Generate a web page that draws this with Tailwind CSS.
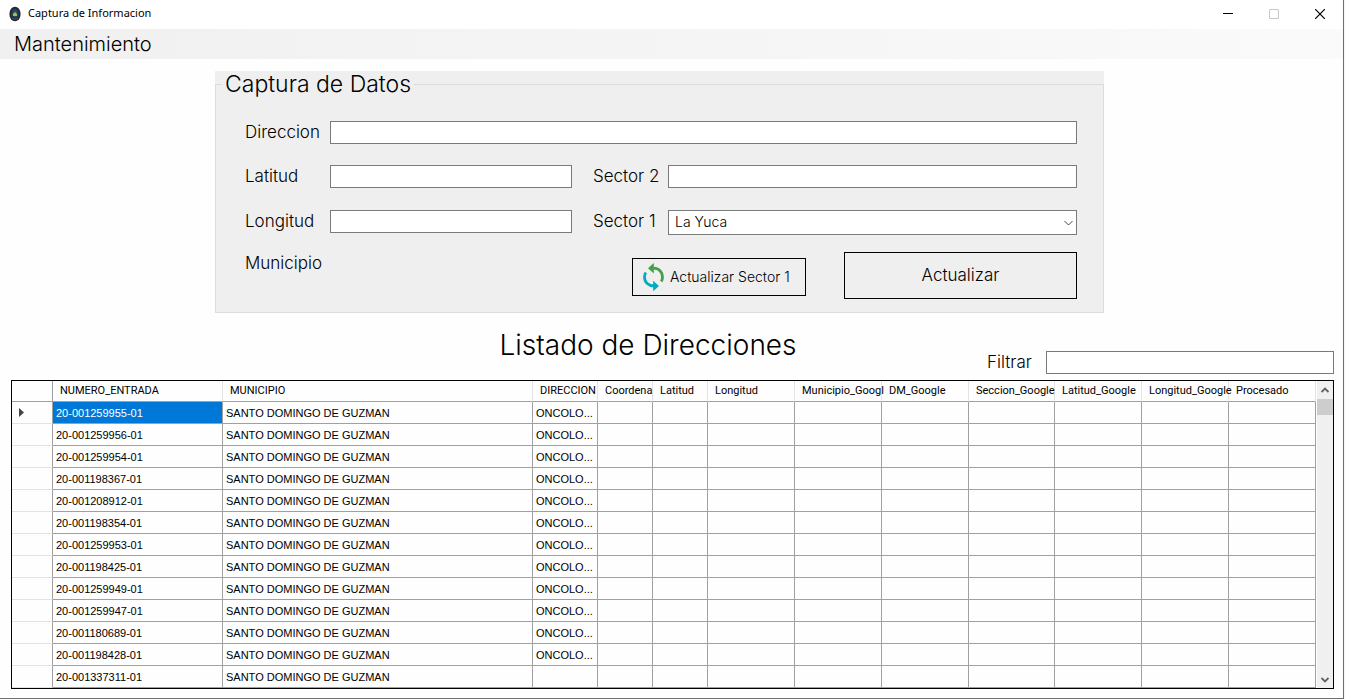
<!DOCTYPE html>
<html lang="es">
<head>
<meta charset="utf-8">
<title>Captura de Informacion</title>
<script src="https://cdn.jsdelivr.net/npm/@tailwindcss/browser@4"></script>
</head>
<body class="bg-[#f4f4f4] pr-px text-black font-[Inter,sans-serif] font-light">
<div class="flex min-h-screen flex-col border-r border-b border-[#6e6e6e] bg-[#fefefe]">
  <header class="flex h-[29px] items-center bg-white pb-[2px] pl-2 font-['Noto_Sans',sans-serif] font-normal">
    <svg class="h-4 w-4" viewBox="0 0 16 16" aria-hidden="true">
      <ellipse cx="7" cy="8" rx="5.6" ry="7.3" fill="#33221c"/>
      <ellipse cx="7" cy="8" rx="4.2" ry="5.8" fill="#123c63"/>
      <ellipse cx="7" cy="7.5" rx="2.7" ry="4" fill="#174f73"/>
      <path d="M5 10V8l2-2 2 2v2z" fill="#b9b548"/>
      <path d="M4 12.5q3 1.5 6 0" stroke="#5c4a35" fill="none"/>
    </svg>
    <span class="ml-1 text-[11px]">Captura de Informacion</span>
    <div class="ml-auto flex h-full">
      <button aria-label="Minimizar" class="flex w-[46px] items-center justify-center"><svg class="h-[10px] w-[10px]" viewBox="0 0 10 10"><path d="M0 4.5h10" stroke="#000"/></svg></button>
      <button aria-label="Maximizar" disabled class="flex w-[46px] items-center justify-center"><svg class="h-[10px] w-[10px]" viewBox="0 0 10 10"><path d="M.5.5h9v9h-9z" stroke="#c8c8c8" fill="none"/></svg></button>
      <button aria-label="Cerrar" class="flex w-[46px] items-center justify-center"><svg class="h-[10px] w-[10px]" viewBox="0 0 10 10"><path d="M0 0l10 10M10 0L0 10" stroke="#000" stroke-width="1.2"/></svg></button>
    </div>
  </header>
  <nav class="flex h-[30px] items-center bg-linear-to-r from-[#f0f0f0] to-[#fafafa] pl-[14px]">
    <button class="text-[20px]">Mantenimiento</button>
  </nav>

  <main class="flex flex-1 flex-col pr-[9px] pb-[9px] pl-[11px]">
    <form class="mt-3 mr-[230px] ml-[204px] bg-[#efefef]">
      <fieldset class="border border-[#dcdcdc] pr-[26px] pb-[13px] pl-[29px]">
        <legend class="-ml-[23px] h-[26px] px-[3px] text-[23px] leading-[26px]">Captura de Datos</legend>
        <div class="grid grid-cols-[85px_242fr_96px_409fr] items-start gap-y-[21px] pt-6 text-[17px]">
          <label for="dir" class="leading-[23px]">Direccion</label>
          <input id="dir" type="text" class="col-span-3 h-[23px] border border-[#7a7a7a] bg-white px-1 text-sm">
          <label for="lat" class="leading-[23px]">Latitud</label>
          <input id="lat" type="text" class="h-[23px] min-w-0 border border-[#7a7a7a] bg-white px-1 text-sm">
          <label for="s2" class="pl-[21px] leading-[23px]">Sector 2</label>
          <input id="s2" type="text" class="mb-px h-[23px] min-w-0 border border-[#7a7a7a] bg-white px-1 text-sm">
          <label for="lon" class="leading-[23px]">Longitud</label>
          <input id="lon" type="text" class="h-[23px] min-w-0 border border-[#7a7a7a] bg-white px-1 text-sm">
          <label for="s1" class="pl-[21px] leading-[23px]">Sector 1</label>
          <div class="relative">
            <select id="s1" class="block h-[25px] w-full appearance-none border border-[#7a7a7a] bg-white px-[6px] pb-[2px] text-[14px]"><option>La Yuca</option></select>
            <svg class="pointer-events-none absolute top-[10px] right-1 h-[6px] w-[9px]" viewBox="0 0 9 6" aria-hidden="true"><path d="M.5 1l4 4 4-4" stroke="#444" fill="none"/></svg>
          </div>
        </div>
        <div class="mt-[17px] flex items-end">
          <span class="self-start text-[17px] leading-[23px]">Municipio</span>
          <button type="button" class="mr-[38px] mb-[3px] ml-auto flex h-[38px] w-[174px] items-center border border-black pl-[9px] text-[14px]">
            <svg class="mr-1 h-[30px] w-6 shrink-0" viewBox="0 0 24 30" aria-hidden="true">
              <path d="M11.5 6.2C17 6.200 20.500 10 20.500 15c0 1.800-.4 3.200-1.300 4.500" stroke="#43a047" stroke-width="2.800" fill="none"/>
              <path d="M6 6.200L11.800 1v10.500z" fill="#43a047"/>
              <path d="M3.800 10.500C2.800 12 2.500 13.500 2.500 15.200c0 5 4 8.800 9.500 8.800" stroke="#00acc1" stroke-width="2.800" fill="none"/>
              <path d="M17 24l-5.800-5.300V29.200z" fill="#00acc1"/>
            </svg>
            <span class="pb-[2px] whitespace-nowrap">Actualizar Sector 1</span>
          </button>
          <button type="button" class="h-[47px] w-[233px] border border-black text-[17px]">Actualizar</button>
        </div>
      </fieldset>
    </form>

    <div class="mt-[13px] mb-[6px] flex h-12 items-start">
      <h1 class="ml-[298px] flex-1 text-center text-[28px] leading-[38px]">Listado de Direcciones</h1>
      <div class="flex items-center self-end">
        <label for="filtro" class="w-[59px] text-[17px] leading-[23px]">Filtrar</label>
        <input id="filtro" type="text" class="h-[23px] w-[288px] border border-[#7a7a7a] bg-white px-1 text-sm">
      </div>
    </div>

    <section class="flex border border-black bg-[#fefefe]">
      <div class="min-w-0 flex-1">
        <table class="w-full table-fixed border-separate border-spacing-0 text-left font-['Liberation_Sans',sans-serif] text-[11px] leading-[20px] font-normal whitespace-nowrap">
          <colgroup><col class="w-[41px]"><col class="w-[170px]"><col class="w-[310px]"><col class="w-[65px]"><col class="w-[55px]"><col class="w-[55px]"><col class="w-[87px]"><col class="w-[87px]"><col class="w-[87px]"><col class="w-[86px]"><col class="w-[87px]"><col class="w-[87px]"><col class="w-[87px]"></colgroup>
          <thead class="font-[Roboto,sans-serif]"><tr id="head" class="h-[21px]"></tr></thead>
          <tbody id="rows"></tbody>
        </table>
      </div>
      <div class="ml-px flex w-4 flex-col items-center bg-[#f0f0f0]" aria-hidden="true">
        <svg class="my-[6px] h-[6px] w-2 shrink-0" viewBox="0 0 8 6"><path d="M.5 5L4 1.500 7.500 5" stroke="#606060" stroke-width="1.800" fill="none"/></svg>
        <div class="h-[16px] w-full bg-[#cdcdcd]"></div>
        <svg class="mt-auto mb-[5px] h-[6px] w-2 shrink-0" viewBox="0 0 8 6"><path d="M.5 1L4 4.500 7.500 1" stroke="#606060" stroke-width="1.800" fill="none"/></svg>
      </div>
    </section>
  </main>
</div>
<script>
  const heads = ['', 'NUMERO_ENTRADA', 'MUNICIPIO', 'DIRECCION', 'Coordena', 'Latitud', 'Longitud', 'Municipio_Googl', 'DM_Google', 'Seccion_Google', 'Latitud_Google', 'Longitud_Google', 'Procesado'];
  const ids = ['20-001259955-01', '20-001259956-01', '20-001259954-01', '20-001198367-01', '20-001208912-01', '20-001198354-01', '20-001259953-01', '20-001198425-01', '20-001259949-01', '20-001259947-01', '20-001180689-01', '20-001198428-01', '20-001337311-01'];
  document.getElementById('head').innerHTML = heads.map((h, i) =>
    `<th scope="col" class="border-r border-b border-b-[#a0a0a0] p-0 font-normal ${i ? 'border-r-[#e3e3e3] pl-[7px]' : 'border-r-[#a0a0a0]'}">${h}</th>`).join('');
  const marker = '<svg class="ml-[7px] h-[9px] w-[5px]" viewBox="0 0 5 9" aria-hidden="true"><path d="M0 0l5 4.500L0 9z" fill="#444"/></svg>';
  document.getElementById('rows').innerHTML = ids.map((id, r) => {
    const cells = [id, 'SANTO DOMINGO DE GUZMAN', r < 12 ? 'ONCOLO...' : '', '', '', '', '', '', '', '', '', ''];
    return `<tr class="h-[22px]"><td class="border-r border-b border-r-[#a0a0a0] border-b-[#e3e3e3] p-0">${r ? '' : marker}</td>` +
      cells.map((c, i) => `<td class="overflow-hidden border-r border-b border-[#a0a0a0] p-0 pl-[3px] ${!r && !i ? 'bg-[#0078d7] text-white' : ''}">${c}</td>`).join('') + '</tr>';
  }).join('');
</script>
</body>
</html>
